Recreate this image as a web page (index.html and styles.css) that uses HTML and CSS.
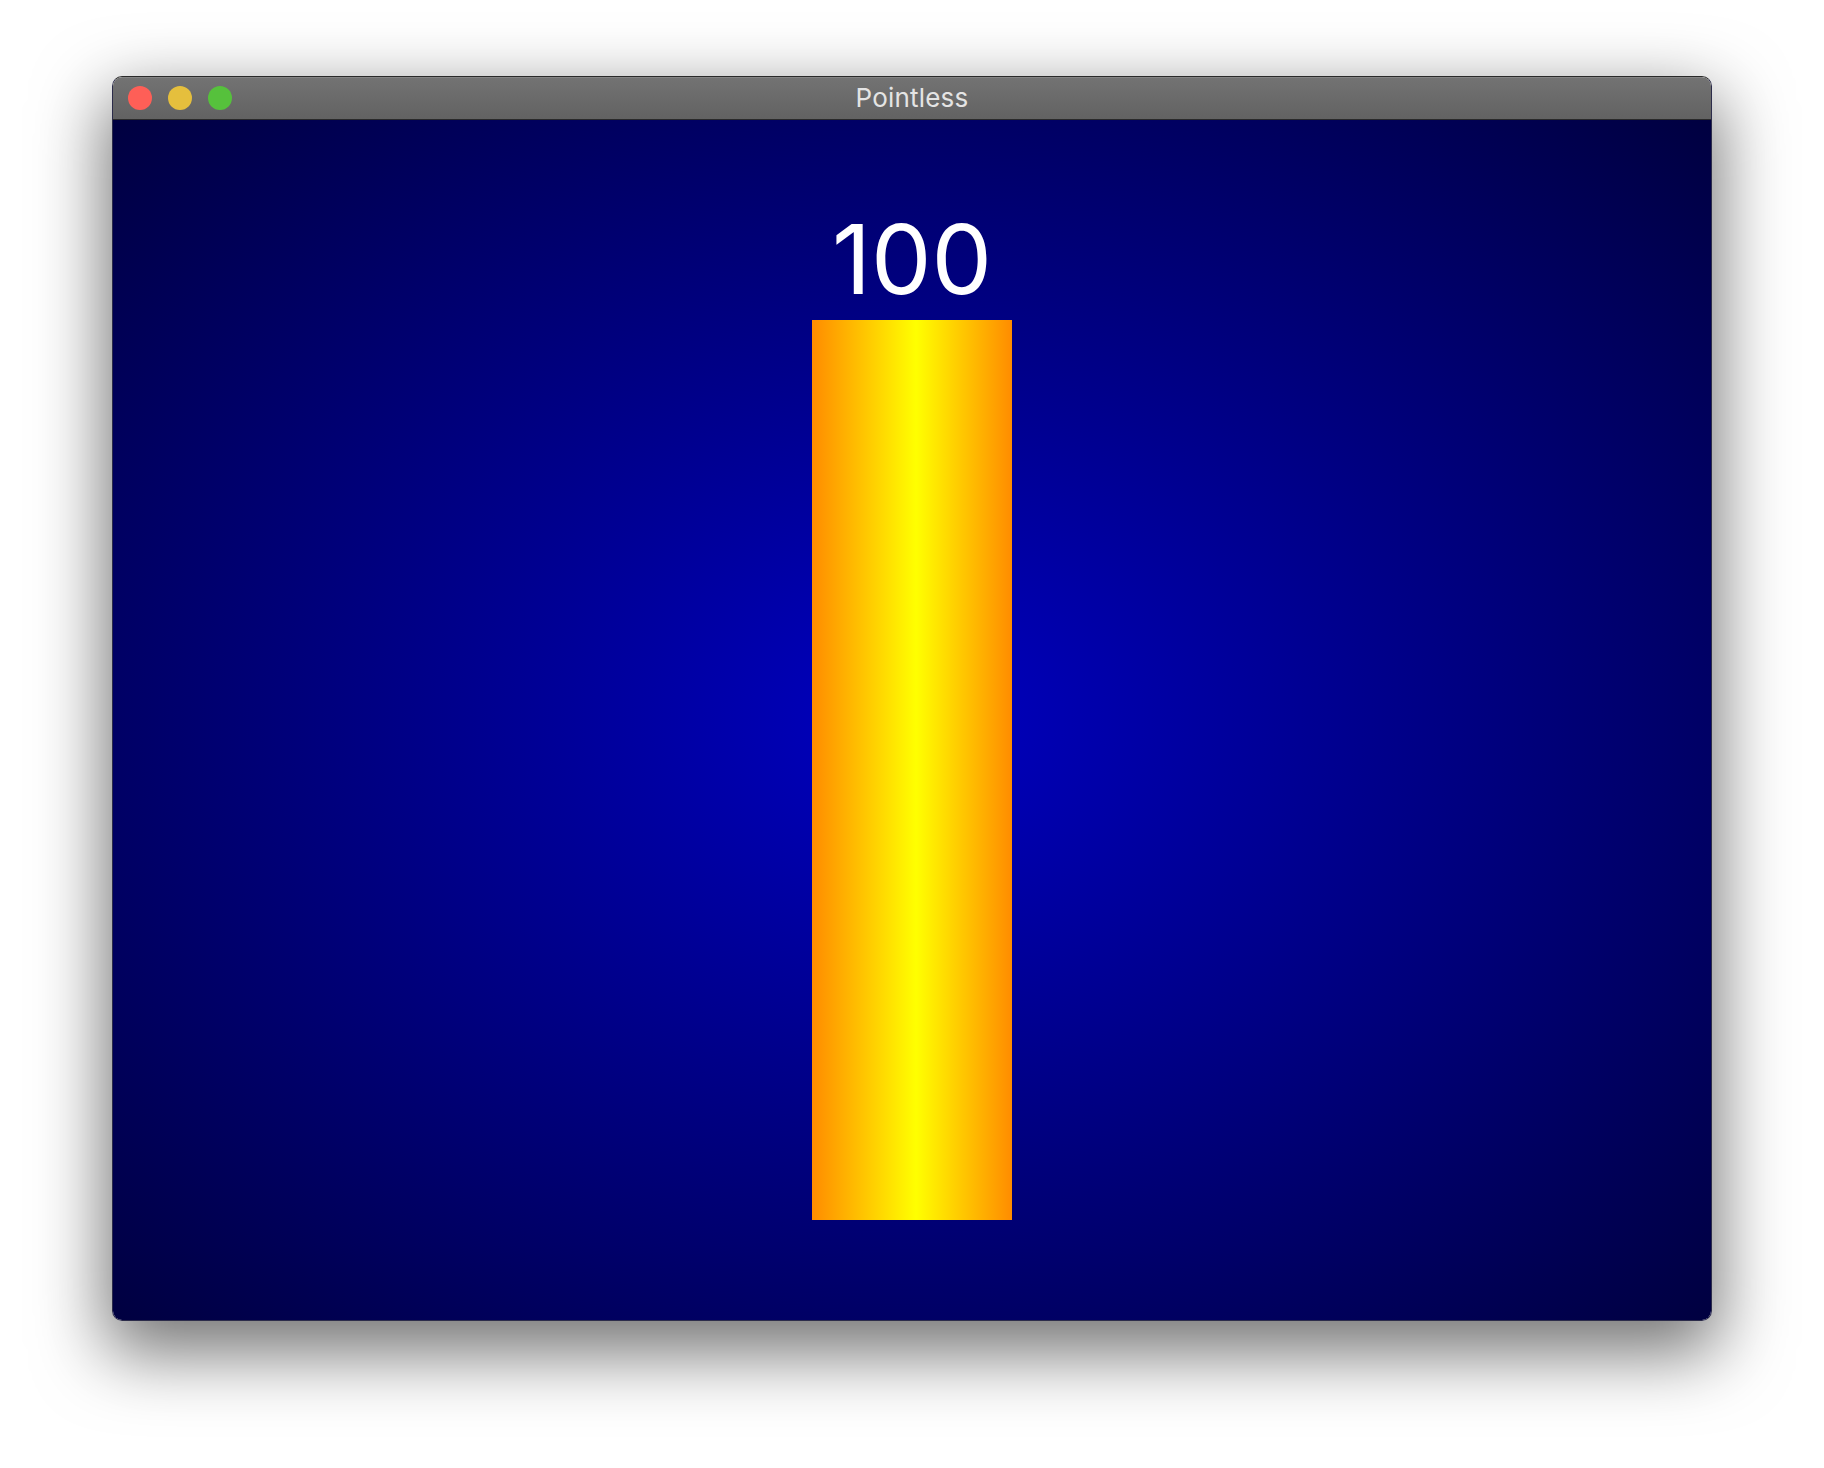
FILE: index.html
```html
<!DOCTYPE html>
<html>
<head>
<meta charset="utf-8">
<title>Pointless</title>
<link rel="stylesheet" href="styles.css">
</head>
<body>
<div class="window">
  <div class="titlebar">
    <div class="lights">
      <span class="light red"></span>
      <span class="light yellow"></span>
      <span class="light green"></span>
    </div>
    <div class="title">Pointless</div>
    <div class="spacer"></div>
  </div>
  <div class="content">
    <div class="score">100</div>
    <div class="bar"></div>
  </div>
</div>
</body>
</html>
```
FILE: styles.css
```css
html, body {
  margin: 0;
  padding: 0;
  background: #ffffff;
}
body {
  padding: 76px 112px 146px 112px;
  font-family: Inter, "Liberation Sans", sans-serif;
}
.window {
  width: 1600px;
  box-sizing: border-box;
  border: 1px solid #2c2c4a;
  border-top-color: #2a2a2a;
  border-radius: 10px;
  overflow: hidden;
  box-shadow: 0 26px 70px 6px rgba(0, 0, 0, 0.55);
}
.titlebar {
  height: 42px;
  border-bottom: 1px solid #2a2a2a;
  background: linear-gradient(to bottom, #737373, #626262);
  display: grid;
  grid-template-columns: 1fr auto 1fr;
  align-items: center;
  box-shadow: inset 0 1px 0 rgba(255, 255, 255, 0.12);
}
.lights {
  display: flex;
  gap: 16px;
  padding-left: 15px;
}
.light {
  width: 24px;
  height: 24px;
  border-radius: 50%;
  display: block;
}
.red { background: #fe5f57; }
.yellow { background: #e5bf3d; }
.green { background: #56c13c; }
.title {
  color: #e4e4e4;
  font-size: 26px;
  line-height: 42px;
  letter-spacing: 0.2px;
}
.content {
  height: 1200px;
  display: flex;
  flex-direction: column;
  align-items: center;
  padding-top: 91px;
  box-sizing: border-box;
  background: radial-gradient(ellipse farthest-corner at 50% 50%, #0000c0 0%, #000040 100%);
}
.score {
  color: #ffffff;
  font-size: 96px;
  line-height: 96px;
  height: 96px;
  margin-bottom: 13px;
}
.bar {
  width: 200px;
  height: 900px;
  background: linear-gradient(to right, #ff8c00 0%, #ffff00 52%, #ff8c00 100%);
}
```
